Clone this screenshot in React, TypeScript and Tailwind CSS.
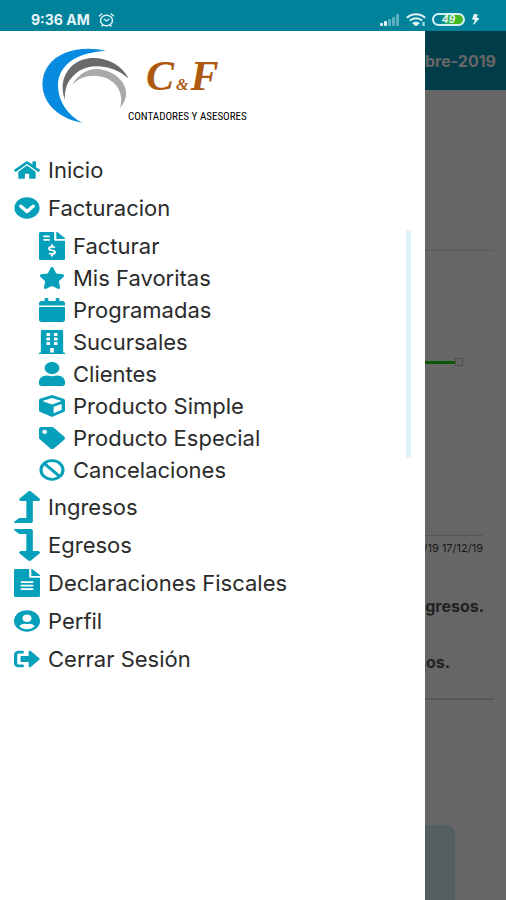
import type { IconType } from "react-icons";
import {
  FaBan,
  FaBolt,
  FaBuilding,
  FaCalendar,
  FaChevronCircleDown,
  FaCube,
  FaFileAlt,
  FaFileInvoiceDollar,
  FaHome,
  FaLevelDownAlt,
  FaLevelUpAlt,
  FaSignOutAlt,
  FaStar,
  FaTag,
  FaUser,
  FaUserCircle,
} from "react-icons/fa";

type Item = { label: string; icon: IconType; size: string };

const billing: Item[] = [
  { label: "Facturar", icon: FaFileInvoiceDollar, size: "h-7" },
  { label: "Mis Favoritas", icon: FaStar, size: "h-[22px]" },
  { label: "Programadas", icon: FaCalendar, size: "h-6" },
  { label: "Sucursales", icon: FaBuilding, size: "h-6" },
  { label: "Clientes", icon: FaUser, size: "h-6" },
  { label: "Producto Simple", icon: FaCube, size: "h-[22px]" },
  { label: "Producto Especial", icon: FaTag, size: "h-[22px]" },
  { label: "Cancelaciones", icon: FaBan, size: "h-[22px]" },
];

const general: Item[] = [
  { label: "Ingresos", icon: FaLevelUpAlt, size: "h-8" },
  { label: "Egresos", icon: FaLevelDownAlt, size: "h-8" },
  { label: "Declaraciones Fiscales", icon: FaFileAlt, size: "h-7" },
  { label: "Perfil", icon: FaUserCircle, size: "h-[22px]" },
  { label: "Cerrar Sesión", icon: FaSignOutAlt, size: "h-[22px]" },
];

const ItemContent = ({ label, icon: Icon, size }: Item) => (
  <>
    <Icon
      className={`w-[26px] shrink-0 text-[#06a0bb] ${size}`}
      preserveAspectRatio="none"
      aria-hidden="true"
    />
    <span>{label}</span>
  </>
);

const StatusBar = () => (
  <header className="flex h-[31px] items-center justify-between bg-[#00829b] pt-2 pr-[26px] pl-[31px] text-[#e4f5f8]">
    <div className="flex items-center gap-2">
      <span className="text-sm font-bold">9:36 AM</span>
      <svg className="h-4 w-[17px]" viewBox="0 0 17 16" fill="none" stroke="currentColor">
        <ellipse cx="8.5" cy="8.5" rx="6" ry="5.2" strokeWidth="1.4" />
        <path d="M1 4.2 4.2 1.5M16 4.2 12.8 1.5M3.6 14.5l1.2-1.4M13.4 14.5l-1.2-1.4" strokeWidth="1.4" />
        <path d="m5.8 7 2.7 2 2.8-2" strokeWidth="1.2" />
      </svg>
    </div>
    <div className="flex items-center gap-[6px]">
      <svg className="h-3 w-5" viewBox="0 0 20 12" fill="currentColor">
        <rect x="0" y="9" width="3" height="3" rx="1" />
        <rect x="4" y="7" width="3" height="5" rx="1" />
        <g opacity="0.4">
          <rect x="8" y="5" width="3" height="7" rx="1" />
          <rect x="12" y="3" width="3" height="9" rx="1" />
          <rect x="16" y="0" width="3" height="12" rx="1" />
        </g>
      </svg>
      <svg className="h-[14px] w-5" viewBox="0 0 20 14" fill="none" stroke="currentColor" strokeWidth="1.9">
        <path d="M.8 4.8c5-4.800 13.400-4.800 18.400 0M3.800 7.600c3.500-3.200 8.900-3.200 12.400 0" />
        <path d="M6.600 10.200c1.900-1.600 4.900-1.600 6.800 0L10 13z" fill="currentColor" strokeWidth=".8" />
        <path d="M17.500 9v4" strokeWidth="2.400" opacity=".7" />
      </svg>
      <div className="flex h-[13px] w-[33px] rounded-full border-2 border-[#d5f1f5] bg-linear-to-r from-[#00829b] from-20% via-[#41b922] via-60% to-[#41b922]">
        <span className="w-full text-center text-[10px] leading-[9px] font-bold italic">49</span>
      </div>
      <FaBolt className="h-[11px] w-[9px] rotate-12" aria-hidden="true" />
    </div>
  </header>
);

const Logo = () => (
  <div className="flex items-start pt-[17px] pl-[42px]">
    <svg className="h-[76px] w-[86px]" viewBox="0 0 86 76">
      <path
        d="M64 3C44-2 18 1 6 18-7 37 2 68 41 75 28 69 16 55 16 37 16 18 34 4 64 3Z"
        fill="#078be0"
      />
      <path
        d="M23 52C18 38 21 26 31 17 46 4 76 9 87 31 74 18 50 14 37 23 27 30 22 39 23 52Z"
        fill="#6b696b"
      />
      <path
        d="M30 37C37 25 46 21 55 21 76 22 94 42 78 60 83 43 72 30 56 28 45 27 37 30 30 37Z"
        fill="#aaa8aa"
      />
    </svg>
    <div className="flex flex-col gap-[14px] pt-2">
      <p className="flex items-baseline gap-[2px] pl-[18px] font-['Liberation_Serif',serif] text-[42px] leading-10 font-bold text-[#ad5910] italic">
        <span>C</span>
        <span className="text-base">&amp;</span>
        <span>F</span>
      </p>
      <p className="font-['Liberation_Sans_Narrow','Roboto_Condensed','Liberation_Sans',sans-serif] text-[11px] leading-3 whitespace-nowrap text-black">
        CONTADORES Y ASESORES
      </p>
    </div>
  </div>
);

const Drawer = () => (
  <aside className="absolute inset-y-0 left-0 w-[84%] bg-white">
    <Logo />
    <nav className="pt-[27px] text-[22px] leading-6 text-[#2b2b2b]">
      <a href="#inicio" className="flex h-[38px] items-center gap-2 pl-[14px]">
        <ItemContent label="Inicio" icon={FaHome} size="h-5" />
      </a>
      <button type="button" aria-expanded="true" className="flex h-[38px] w-full items-center gap-2 pl-[14px]">
        <ItemContent label="Facturacion" icon={FaChevronCircleDown} size="h-[22px]" />
      </button>
      <div className="flex justify-between pt-[3px] pr-[14px] pb-[2px] pl-[39px]">
        <ul>
          {billing.map((item) => (
            <li key={item.label}>
              <a href="#facturacion" className="flex h-8 items-center gap-2">
                <ItemContent {...item} />
              </a>
            </li>
          ))}
        </ul>
        <div className="h-[228px] w-[5px] bg-[#dff3f7]"></div>
      </div>
      <ul>
        {general.map((item) => (
          <li key={item.label}>
            <a href="#menu" className="flex h-[38px] items-center gap-2 pl-[14px]">
              <ItemContent {...item} />
            </a>
          </li>
        ))}
      </ul>
    </nav>
  </aside>
);

// Dashboard that stays dimmed while the drawer is open
const Dashboard = () => (
  <div className="flex flex-1 flex-col bg-white text-right">
    <div className="flex h-[59px] items-center justify-end bg-[#0098b6] pr-[10px]">
      <h1 className="text-base font-bold text-white">Diciembre-2019</h1>
    </div>
    <section className="px-3 pt-40">
      <hr className="border-[#e0e0e0]" />
      <div className="flex items-center justify-end pt-[107px] pr-[31px]">
        <div className="h-[3px] flex-1 bg-[#14dc14]"></div>
        <div className="size-2 border border-[#c4c4c4]"></div>
      </div>
      <div className="pt-[169px] pr-[11px]">
        <hr className="border-[#d8d8d8]" />
        <p className="pt-1 text-[11px] leading-4 text-[#444]">16/12/19 17/12/19</p>
      </div>
      <p className="pt-10 pr-[10px] text-base leading-5 font-bold text-[#555]">Ingresos.</p>
      <p className="pt-9 pr-[44px] text-base leading-5 font-bold text-[#555]">Egresos.</p>
      <hr className="mt-[26px] border-t-2 border-[#dcdcdc]" />
    </section>
    <div className="mt-[125px] mr-[51px] ml-3 flex-1 rounded-t-lg bg-[#d4eef5]"></div>
  </div>
);

const App = () => {
  return (
    <div className="flex min-h-screen flex-col font-[Inter,Roboto,sans-serif]">
      <StatusBar />
      <main className="relative flex flex-1 flex-col overflow-hidden">
        <Dashboard />
        <div className="absolute inset-0 bg-black/60"></div>
        <Drawer />
      </main>
    </div>
  );
};

export default App;
